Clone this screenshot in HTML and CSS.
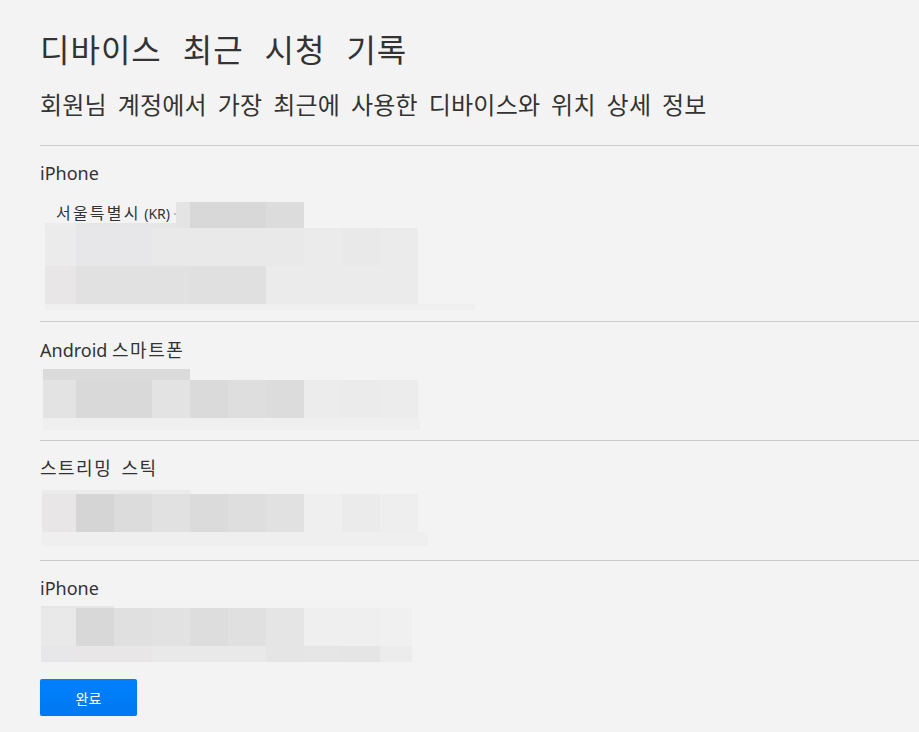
FILE: index.html
```html
<!DOCTYPE html>
<html lang="ko">
<head>
<meta charset="utf-8">
<title>디바이스 최근 시청 기록</title>
<link rel="stylesheet" href="styles.css">
</head>
<body>
<main class="page">
  <h1 class="title">디바이스 최근 시청 기록</h1>
  <p class="subtitle">회원님 계정에서 가장 최근에 사용한 디바이스와 위치 상세 정보</p>

  <section class="device d1">
    <h2 class="device-name">iPhone</h2>
    <div class="mosaic">
      <div class="loc-row">
        <div class="loc-text"><span><span class="ko">서울특별시</span> (KR)<span class="dot">·</span></span></div>
        <span class="lc a"></span><span class="lc b"></span><span class="lc b"></span><span class="lc c"></span>
      </div>
      <div class="row r38 g1">
        <span class="s-eb"></span><span class="s-e7"></span><span class="s-e7"></span><span class="s-e9"></span><span class="s-e9"></span><span class="s-e9"></span><span class="s-e9"></span><span class="s-eb"></span><span class="s-e9"></span><span class="s-eb"></span>
      </div>
      <div class="row r38 g1">
        <span class="s-e8"></span><span class="s-e1"></span><span class="s-e1"></span><span class="s-e1"></span><span class="s-e0"></span><span class="s-e0"></span><span class="s-eb"></span><span class="s-eb"></span><span class="s-eb"></span><span class="s-eb"></span>
      </div>
      <div class="faint f1"></div>
    </div>
  </section>

  <section class="device d2">
    <h2 class="device-name">Android <span class="ko">스마트폰</span></h2>
    <div class="mosaic">
      <div class="strip st2"></div>
      <div class="row r38 g2">
        <span class="s-e3"></span><span class="s-d9"></span><span class="s-d9"></span><span class="s-e3"></span><span class="s-da"></span><span class="s-de"></span><span class="s-dc"></span><span class="s-ec"></span><span class="s-eb"></span><span class="s-ec"></span>
      </div>
      <div class="faint f2"></div>
    </div>
  </section>

  <section class="device d3">
    <h2 class="device-name"><span class="ko">스트리밍 스틱</span></h2>
    <div class="mosaic">
      <div class="strip st3"></div>
      <div class="row r38 g3">
        <span class="s-e8"></span><span class="s-d5"></span><span class="s-dc"></span><span class="s-e1"></span><span class="s-db"></span><span class="s-de"></span><span class="s-e1"></span><span class="s-ef"></span><span class="s-eb"></span><span class="s-ee"></span>
      </div>
      <div class="faint f3"></div>
    </div>
  </section>

  <section class="device d4">
    <h2 class="device-name">iPhone</h2>
    <div class="mosaic">
      <div class="strip st4"></div>
      <div class="row r38 g4">
        <span class="s-e9"></span><span class="s-d8"></span><span class="s-e0"></span><span class="s-e2"></span><span class="s-dd"></span><span class="s-e0"></span><span class="s-e5"></span><span class="s-ef"></span><span class="s-ef"></span><span class="s-f0"></span>
      </div>
      <div class="row r16 g4">
        <span class="s-e7"></span><span class="s-e8"></span><span class="s-e8"></span><span class="s-e9"></span><span class="s-e9"></span><span class="s-e9"></span><span class="s-e5"></span><span class="s-e6"></span><span class="s-e5"></span><span class="s-ec"></span>
      </div>
    </div>
    <button class="done" type="button">완료</button>
  </section>
</main>
</body>
</html>
```

FILE: styles.css
```css
* { box-sizing: border-box; }

html, body {
  margin: 0;
  padding: 0;
  background: #f3f3f3;
}

body {
  font-family: "Noto Sans", "Noto Sans CJK KR", sans-serif;
  color: #333;
  overflow: hidden;
}

.page {
  padding: 28px 0 0 40px;
}

.title {
  margin: 0;
  font-size: 32px;
  line-height: 40px;
  font-weight: 400;
  color: #333;
  letter-spacing: 1px;
  word-spacing: 11px;
  font-family: "Noto Sans CJK KR", sans-serif;
}

.subtitle {
  margin: 20px 0 0;
  font-size: 24px;
  line-height: 32px;
  font-weight: 400;
  color: #333;
  letter-spacing: 0.2px;
  word-spacing: 4px;
  font-family: "Noto Sans CJK KR", sans-serif;
}

.device {
  border-top: 1px solid #cccccc;
}

.d1 { margin-top: 25px; padding: 15px 0 11px; }
.d2 { padding: 16px 0 10px; }
.d3 { padding: 15px 0 14px; }
.d4 { padding: 15px 0 0; }

.device-name {
  margin: 0;
  font-size: 18px;
  line-height: 24px;
  font-weight: 400;
  color: #333;
}

.device-name .ko {
  letter-spacing: 1.5px;
  word-spacing: 3px;
}

.mosaic { display: flex; flex-direction: column; }
.d1 .mosaic { margin-top: 17px; padding-left: 5px; }
.d2 .mosaic { margin-top: 7px; padding-left: 3px; }
.d3 .mosaic { margin-top: 10px; padding-left: 2px; }
.d4 .mosaic { margin-top: 6px; padding-left: 1px; }

.loc-row {
  display: flex;
  height: 26px;
}

.loc-text {
  width: 131px;
  height: 26px;
  display: flex;
  flex-direction: column;
}

.loc-text > span {
  display: block;
  height: 21px;
  padding-left: 11px;
  font-size: 14px;
  line-height: 20px;
  white-space: nowrap;
  color: #333;
}

.loc-text .ko {
  font-size: 16px;
  letter-spacing: 2.2px;
  font-family: "Noto Sans CJK KR", sans-serif;
}

.loc-text .dot {
  margin-left: 3px;
  color: #aaa;
}

.loc-text::after {
  content: "";
  display: block;
  height: 5px;
  background: linear-gradient(to right, #ececec 0 31px, #e6e6e6 31px);
}

.lc { display: block; height: 26px; width: 38px; }
.lc.a { width: 14px; background: #e4e4e4; }
.lc.b { background: #d8d8d8; }
.lc.c { background: #dcdcdc; }

.row { display: grid; }
.r38 { height: 38px; }
.r16 { height: 16px; }
.g1 { grid-template-columns: 31px repeat(9, 38px); }
.g2 { grid-template-columns: 33px repeat(9, 38px); }
.g3 { grid-template-columns: 34px repeat(9, 38px); }
.g4 { grid-template-columns: 35px repeat(8, 38px) 32px; }
.row span { display: block; }

.strip { background: #dadada; }
.st2 { height: 11px; width: 147px; background: #dbdbdb; }
.st3 { height: 4px; width: 148px; background: #ebebeb; }
.st4 { height: 2px; width: 73px; background: #e6e6e6; }

.faint { background: #efefef; }
.f1 { height: 6px; width: 430px; }
.f2 { height: 12px; width: 377px; }
.f3 { height: 14px; width: 386px; }

.s-d5 { background: #d5d5d5; }
.s-d8 { background: #d8d8d8; }
.s-d9 { background: #d9d9d9; }
.s-da { background: #dadada; }
.s-db { background: #dbdbdc; }
.s-dc { background: #dcdcdc; }
.s-dd { background: #dddddd; }
.s-de { background: #dedede; }
.s-e0 { background: #e0e0e0; }
.s-e1 { background: #e1e1e1; }
.s-e2 { background: #e2e2e2; }
.s-e3 { background: #e3e3e3; }
.s-e5 { background: #e5e5e5; }
.s-e6 { background: #e6e6e6; }
.s-e7 { background: #e7e7e9; }
.s-e8 { background: #e8e6e6; }
.s-e9 { background: #e9e9e9; }
.s-eb { background: #ebebeb; }
.s-ec { background: #ececec; }
.s-ee { background: #eeeeee; }
.s-ef { background: #efefef; }
.s-f0 { background: #f0f0f0; }

.done {
  display: block;
  margin-top: 17px;
  width: 97px;
  height: 37px;
  padding: 0;
  border: none;
  border-radius: 2px;
  background: linear-gradient(to bottom, #0080ff, #0078f0);
  box-shadow: 0 1px 1px rgba(0, 0, 0, 0.25);
  color: #fff;
  font-size: 14px;
  font-family: "Noto Sans CJK KR", sans-serif;
  cursor: pointer;
}
```
